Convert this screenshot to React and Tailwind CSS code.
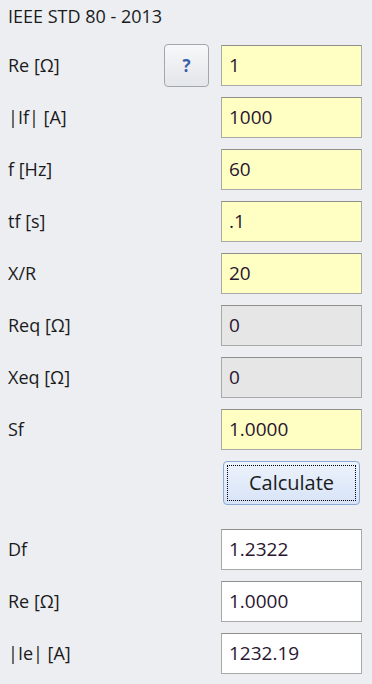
import React from "react";

const rows = [
  { label: "Re [Ω]", value: "1", kind: "edit", help: true },
  { label: "|If| [A]", value: "1000", kind: "edit" },
  { label: "f [Hz]", value: "60", kind: "edit" },
  { label: "tf [s]", value: ".1", kind: "edit" },
  { label: "X/R", value: "20", kind: "edit" },
  { label: "Req [Ω]", value: "0", kind: "off" },
  { label: "Xeq [Ω]", value: "0", kind: "off" },
  { label: "Sf", value: "1.0000", kind: "edit" },
];

const results = [
  { label: "Df", value: "1.2322" },
  { label: "Re [Ω]", value: "1.0000" },
  { label: "|Ie| [A]", value: "1232.19" },
];

function Field({ value, kind }) {
  const bg =
    kind === "edit"
      ? "bg-[#ffffc4]"
      : kind === "off"
      ? "bg-[#e6e6e6]"
      : "bg-white";
  return (
    <div
      className={`w-[141px] h-[41px] ${bg} border border-[#a9a9a9] border-t-[#8f8f8f] flex items-center px-[7px] text-[19px] font-medium text-[#2a1530]`}
    >
      {value}
    </div>
  );
}

function Row({ label, value, kind, help }) {
  return (
    <div className="flex items-center h-[41px]">
      <div className="flex-1 pl-[8px] text-[18px] font-medium text-[#1b1b1b]">{label}</div>
      {help ? (
        <button className="mr-[12px] w-[45px] h-[43px] rounded-[4px] border border-[#a3a6ab] bg-gradient-to-b from-[#f7f8f9] to-[#e3e6ea] text-[17px] font-bold text-[#3a5fa8] flex items-center justify-center">
          ?
        </button>
      ) : null}
      <div className="mr-[10px]">
        <Field value={value} kind={kind} />
      </div>
    </div>
  );
}

export default function App() {
  return (
    <div
      className="w-[372px] h-[684px] bg-[#eceef2] overflow-hidden"
      style={{ fontFamily: '"Open Sans", "Noto Sans", sans-serif' }}
    >
      <div className="h-[45px] pl-[8px] pt-[3px] text-[18px] font-medium text-[#1b1b1b]">
        IEEE STD 80 - 2013
      </div>
      <div className="flex flex-col gap-[11px]">
        {rows.map((r, i) => (
          <Row key={i} {...r} />
        ))}
        <div className="flex justify-end pr-[12px]">
          <button className="w-[137px] h-[44px] rounded-[4px] border border-[#8aa9d3] bg-gradient-to-b from-[#edf3fc] to-[#d7e3f7] p-[3px]">
            <div className="w-full h-full border border-dotted border-black flex items-center justify-center text-[20px] font-medium text-[#1b1b1b]">
              Calculate
            </div>
          </button>
        </div>
      </div>
      <div className="flex flex-col gap-[11px] mt-[24px]">
        {results.map((r, i) => (
          <Row key={i} label={r.label} value={r.value} kind="out" />
        ))}
      </div>
    </div>
  );
}
